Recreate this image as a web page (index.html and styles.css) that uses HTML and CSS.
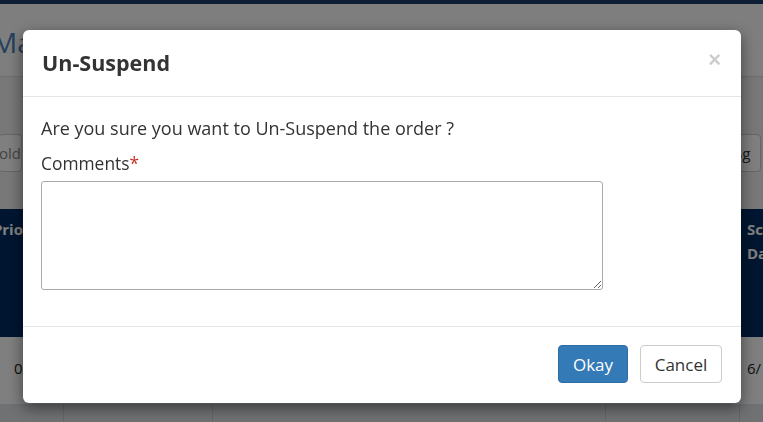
FILE: index.html
```html
<!DOCTYPE html>
<html>
<head>
<meta charset="utf-8">
<link rel="stylesheet" href="styles.css">
</head>
<body>
<div class="page">
  <div class="topbar"></div>
  <div class="titlebar"><h1 class="page-title">Manage</h1></div>
  <div class="filters">
    <div class="input input-left">Search Hold</div>
    <div class="spacer"></div>
    <div class="input input-right">Sg</div>
  </div>
  <div class="thead">
    <div class="th th-left">Prio</div>
    <div class="th-fill"></div>
    <div class="th th-right">Sc<br>Da</div>
  </div>
  <div class="trow">
    <div class="td td-left">0</div>
    <div class="th-fill"></div>
    <div class="td td-right">6/</div>
  </div>
  <div class="trow2">
    <div class="cell c1"></div>
    <div class="cell c2"></div>
    <div class="cell c3"></div>
    <div class="cell c4"></div>
    <div class="cell c5"></div>
  </div>
</div>

<div class="backdrop">
  <div class="modal">
    <div class="modal-header">
      <h4 class="modal-title">Un-Suspend</h4>
      <span class="close">&times;</span>
    </div>
    <div class="modal-body">
      <p class="question">Are you sure you want to Un-Suspend the order ?</p>
      <label class="label">Comments<span class="req">*</span></label>
      <textarea class="comments"></textarea>
    </div>
    <div class="modal-footer">
      <button class="btn btn-primary">Okay</button>
      <button class="btn btn-default">Cancel</button>
    </div>
  </div>
</div>
</body>
</html>
```

FILE: styles.css
```css
* { box-sizing: border-box; }
html, body {
  margin: 0;
  padding: 0;
  width: 763px;
  height: 422px;
  overflow: hidden;
  font-family: "Open Sans", "Liberation Sans", sans-serif;
  background: #fff;
}
.page {
  width: 763px;
  height: 422px;
  display: flex;
  flex-direction: column;
}
.topbar {
  height: 4px;
  background: #1d3c68;
  flex: none;
}
.titlebar {
  height: 73px;
  flex: none;
  border-bottom: 1px solid #ddd;
  display: flex;
  align-items: flex-end;
  background: #fdfdfd;
  overflow: hidden;
}
.page-title {
  margin: 0 0 16px -8px;
  font-weight: 400;
  font-size: 28px;
  line-height: 36px;
  color: #4a7fb8;
  white-space: nowrap;
}
.filters {
  height: 132px;
  flex: none;
  display: flex;
  padding-top: 56px;
  border-top: 1px solid #eee;
  background: #f0f0f0;
}
.input {
  height: 38px;
  border: 1px solid #ccc;
  border-radius: 4px;
  background: #fff;
  color: #888;
  font-size: 15px;
  line-height: 36px;
  white-space: nowrap;
  overflow: hidden;
}
.input-left {
  width: 23px;
  margin-left: -1px;
  direction: rtl;
  text-align: left;
  border-left: none;
}
.spacer { flex: 1; }
.input-right {
  width: 22px;
  margin-right: 2px;
  text-indent: -6px;
  color: #333;
}
.thead {
  height: 128px;
  flex: none;
  background: #002b61;
  display: flex;
  color: #fff;
  font-weight: 700;
  font-size: 15px;
  line-height: 24px;
}
.th-fill { flex: 1; }
.th { padding-top: 8px; white-space: nowrap; }
.th-left { width: 23px; overflow: hidden; direction: rtl; text-align: left; }
.th-right { width: 16px; overflow: hidden; }
.trow {
  height: 67px;
  flex: none;
  display: flex;
  align-items: center;
  padding-bottom: 6px;
  font-size: 15px;
  color: #222;
  background: #fff;
}
.td-left { width: 23px; padding-left: 14px; }
.td-right { width: 16px; }
.trow2 {
  flex: 1;
  display: flex;
  background: #dfe3e7;
}
.cell { border-right: 1px solid #c8ccd0; }
.c1 { width: 64px; }
.c2 { width: 149px; }
.c3 { width: 393px; }
.c4 { width: 134px; }
.c5 { flex: 1; border-right: none; }

.backdrop {
  position: fixed;
  left: 0;
  top: 0;
  width: 763px;
  height: 422px;
  background: rgba(0, 0, 0, 0.5);
  padding: 30px 0 0 23px;
}
.modal {
  width: 718px;
  height: 373px;
  background: #fff;
  border-radius: 6px;
  box-shadow: 0 5px 15px rgba(0, 0, 0, 0.5);
  display: flex;
  flex-direction: column;
  color: #333;
}
.modal-header {
  display: flex;
  align-items: center;
  justify-content: space-between;
  padding: 15px 19px;
  border-bottom: 1px solid #e5e5e5;
  height: 67px;
  flex: none;
}
.modal-title {
  margin: 0;
  font-size: 21.5px;
  font-weight: 700;
  line-height: 36px;
  color: #333;
}
.close {
  font-size: 22px;
  font-weight: 700;
  line-height: 1;
  color: #000;
  opacity: 0.2;
  margin-right: 1px;
  margin-top: -6px;
  font-family: "Liberation Sans", Arial, sans-serif;
}
.modal-body {
  padding: 19px 18px 0 18px;
  height: 229px;
  flex: none;
  display: flex;
  flex-direction: column;
  align-items: flex-start;
}
.question {
  margin: 0;
  font-size: 18px;
  line-height: 24px;
}
.label {
  margin-top: 11px;
  font-size: 17.4px;
  line-height: 24px;
}
.req { color: #c9302c; }
.comments {
  margin-top: 6px;
  width: 562px;
  height: 109px;
  border: 1px solid #aaa;
  border-radius: 3px;
  resize: vertical;
  font-family: inherit;
  font-size: 15px;
}
.modal-footer {
  flex: 1;
  border-top: 1px solid #e5e5e5;
  display: flex;
  justify-content: flex-end;
  align-items: flex-start;
  gap: 12px;
  padding: 18px 19px 0 0;
}
.btn {
  height: 38px;
  font-family: inherit;
  font-size: 17px;
  border-radius: 4px;
  padding: 0 10px;
  cursor: pointer;
}
.btn-primary {
  width: 70px;
  background: #337ab7;
  border: 1px solid #2e6da4;
  color: #fff;
}
.btn-default {
  width: 82px;
  background: #fff;
  border: 1px solid #ccc;
  color: #333;
}
```
